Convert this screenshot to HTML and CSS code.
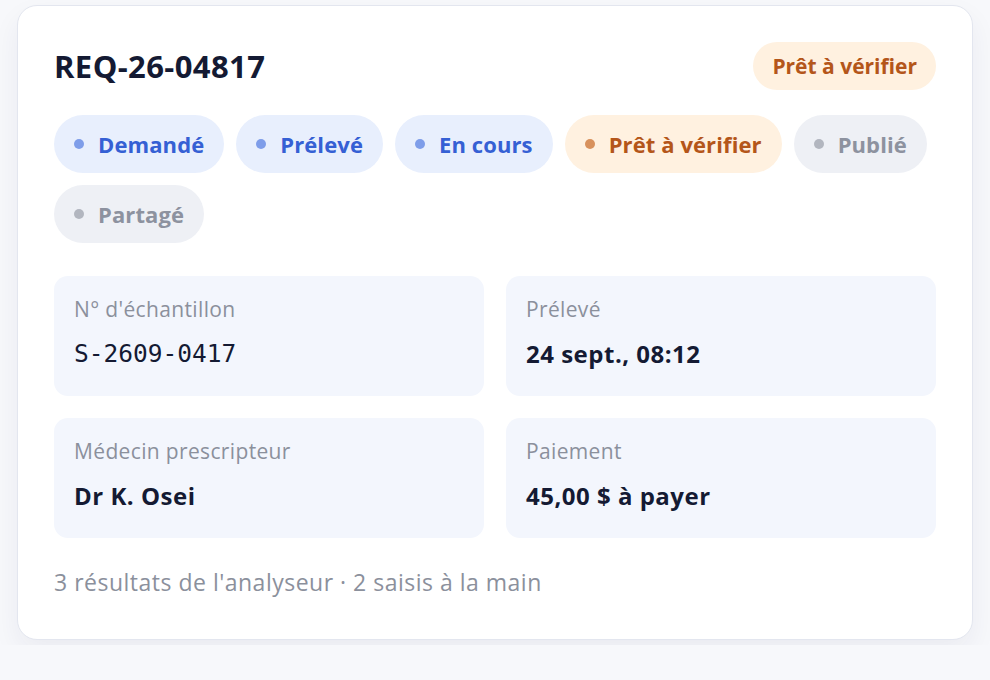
FILE: index.html
```html
<!DOCTYPE html>
<html lang="fr">
<head>
<meta charset="utf-8">
<title>REQ-26-04817</title>
<link rel="stylesheet" href="styles.css">
</head>
<body>
<div class="card">
  <div class="header">
    <h1 class="title">REQ-26-04817</h1>
    <span class="badge">Prêt à vérifier</span>
  </div>
  <div class="steps">
    <span class="pill pill-blue"><span class="dot"></span>Demandé</span>
    <span class="pill pill-blue"><span class="dot"></span>Prélevé</span>
    <span class="pill pill-blue"><span class="dot"></span>En cours</span>
    <span class="pill pill-orange"><span class="dot"></span>Prêt à vérifier</span>
    <span class="pill pill-gray"><span class="dot"></span>Publié</span>
    <span class="pill pill-gray"><span class="dot"></span>Partagé</span>
  </div>
  <div class="info">
    <div class="box">
      <div class="label">N° d'échantillon</div>
      <div class="value mono">S-2609-0417</div>
    </div>
    <div class="box">
      <div class="label">Prélevé</div>
      <div class="value">24 sept., 08:12</div>
    </div>
    <div class="box">
      <div class="label">Médecin prescripteur</div>
      <div class="value">Dr K. Osei</div>
    </div>
    <div class="box">
      <div class="label">Paiement</div>
      <div class="value">45,00 $ à payer</div>
    </div>
  </div>
  <p class="footer">3 résultats de l'analyseur · 2 saisis à la main</p>
</div>
</body>
</html>
```
FILE: styles.css
```css
html, body {
  margin: 0;
  padding: 0;
  background: #f7f8fb;
}
body {
  padding: 5px 17px;
  font-family: "Open Sans", "Noto Sans", sans-serif;
  color: #141a33;
}
.card {
  width: 956px;
  box-sizing: border-box;
  background: #ffffff;
  border: 1px solid #e3e6ef;
  border-radius: 20px;
  padding: 36px 36px 45px;
  box-shadow: 0 12px 28px rgba(30, 40, 80, 0.06);
}
.header {
  display: flex;
  align-items: center;
  justify-content: space-between;
  height: 48px;
}
.title {
  margin: 0;
  font-size: 31px;
  line-height: 36px;
  font-weight: 700;
  letter-spacing: 0.4px;
  color: #141a33;
}
.badge {
  display: inline-flex;
  align-items: center;
  height: 48px;
  padding: 0 19px;
  border-radius: 24px;
  background: #fff1e0;
  color: #b4561a;
  font-size: 21px;
  font-weight: 700;
}
.steps {
  display: flex;
  flex-wrap: wrap;
  gap: 12px 12px;
  margin-top: 25px;
}
.pill {
  display: inline-flex;
  align-items: center;
  gap: 14px;
  height: 58px;
  padding: 0 20px;
  border-radius: 29px;
  font-size: 22px;
  font-weight: 700;
  letter-spacing: 0.1px;
  box-sizing: border-box;
}
.dot {
  width: 10px;
  height: 10px;
  border-radius: 50%;
  flex: none;
}
.pill-blue { background: #e8effd; color: #3560d4; }
.pill-blue .dot { background: #7e9de9; }
.pill-orange { background: #fff1e0; color: #b4561a; }
.pill-orange .dot { background: #d8915c; }
.pill-gray { background: #eef0f5; color: #8d929f; }
.pill-gray .dot { background: #b2b6bf; }
.info {
  display: grid;
  grid-template-columns: 1fr 1fr;
  gap: 22px;
  margin-top: 33px;
}
.box {
  background: #f3f6fd;
  border-radius: 14px;
  padding: 21px 20px 30px;
  display: flex;
  flex-direction: column;
  gap: 21px;
}
.label {
  font-size: 21px;
  line-height: 24px;
  letter-spacing: 0.35px;
  color: #8b909c;
}
.value {
  font-size: 24px;
  line-height: 24px;
  font-weight: 700;
  letter-spacing: 0.5px;
  color: #141a33;
}
.mono {
  font-family: "DejaVu Sans Mono", "Liberation Mono", monospace;
  font-weight: 400;
  font-size: 24.5px;
  letter-spacing: 0;
}
.footer {
  margin: 32px 0 0;
  font-size: 23px;
  line-height: 24px;
  letter-spacing: 0.5px;
  color: #8b909c;
}
```
